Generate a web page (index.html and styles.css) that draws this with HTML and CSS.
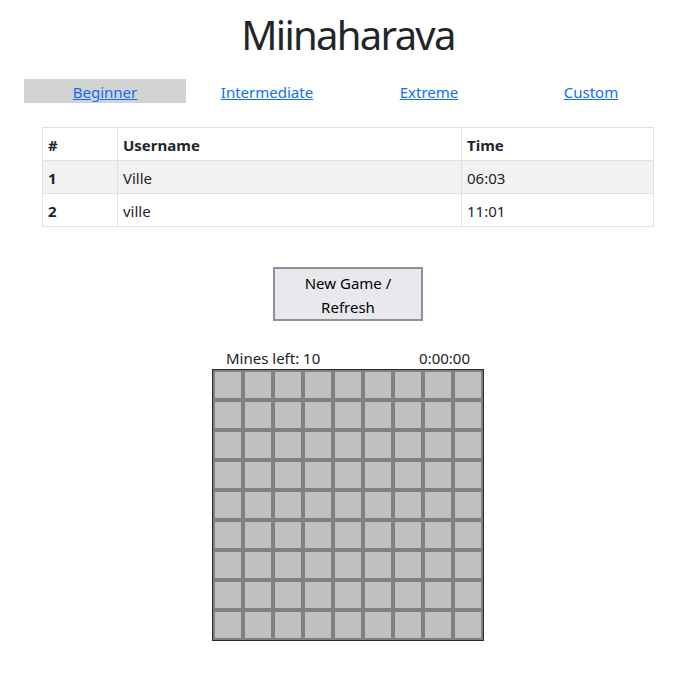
FILE: index.html
```html
<!DOCTYPE html>
<html>
<head>
<meta charset="utf-8">
<link rel="stylesheet" href="styles.css">
</head>
<body>
<div class="app">
  <h1 class="title">Miinaharava</h1>
  <nav class="tabs">
    <div class="tab active"><a href="#">Beginner</a></div>
    <div class="tab"><a href="#">Intermediate</a></div>
    <div class="tab"><a href="#">Extreme</a></div>
    <div class="tab"><a href="#">Custom</a></div>
  </nav>
  <div class="table-wrap">
    <table class="scores">
      <thead>
        <tr><th class="c1">#</th><th class="c2">Username</th><th>Time</th></tr>
      </thead>
      <tbody>
        <tr class="odd"><th>1</th><td>Ville</td><td>06:03</td></tr>
        <tr><th>2</th><td>ville</td><td>11:01</td></tr>
      </tbody>
    </table>
  </div>
  <div class="btn-row">
    <button class="new-game">New Game /<br>Refresh</button>
  </div>
  <div class="game">
    <div class="status"><span>Mines left: 10</span><span>0:00:00</span></div>
    <div class="board" id="board"></div>
  </div>
</div>
<script>
  var b = document.getElementById('board');
  for (var i = 0; i < 81; i++) {
    var c = document.createElement('div');
    c.className = 'cell';
    b.appendChild(c);
  }
</script>
</body>
</html>
```

FILE: styles.css
```css
* { box-sizing: border-box; }
html, body { margin: 0; padding: 0; background: #fff; }
body {
  font-family: "Noto Sans", "Open Sans", sans-serif;
  color: #212529;
  font-size: 15px;
}
.app {
  display: flex;
  flex-direction: column;
  align-items: center;
  padding-left: 18px;
}
.title {
  margin: 8px 0 0;
  font-weight: 400;
  font-size: 40px;
  letter-spacing: -1.7px;
  line-height: 54px;
  height: 54px;
}
.tabs {
  margin-top: 17px;
  width: 648px;
  align-self: flex-start;
  margin-left: 6px;
  display: grid;
  grid-template-columns: repeat(4, 1fr);
}
.tab {
  text-align: center;
  height: 24px;
  line-height: 24px;
  padding-top: 1px;
}
.tab.active { background: #d3d3d3; }
.tab a { color: #0d6efd; text-decoration: underline; }
.table-wrap { margin-top: 24px; width: 612px; align-self: flex-start; margin-left: 24px; }
.scores {
  width: 100%;
  border-collapse: collapse;
  border: 1px solid #dee2e6;
}
.scores th, .scores td {
  border: 1px solid #dee2e6;
  text-align: left;
  padding: 1px 5px 0;
  height: 33px;
  font-size: 15px;
}
.scores th { font-weight: 700; }
.scores td { font-weight: 400; }
.scores .c1 { width: 75px; }
.scores .c2 { width: 344px; }
.scores tr.odd { background: #f2f2f2; }
.btn-row { margin-top: 40px; }
.new-game {
  width: 150px;
  height: 54px;
  background: #e9e9ed;
  border: 2px solid #8f8f9d;
  font-family: inherit;
  font-size: 15px;
  line-height: 24px;
  color: #000;
  padding: 1px 0 0;
}
.game { margin-top: 26px; width: 272px; }
.status {
  display: flex;
  justify-content: space-between;
  padding: 0 14px;
  height: 22px;
  line-height: 22px;
  color: #222;
}
.board {
  display: grid;
  grid-template-columns: repeat(9, 30px);
  grid-auto-rows: 30px;
  border: 1px solid #2a2a2a;
  width: 272px;
}
.cell {
  background: #c0c0c0;
  border: 2px solid #808080;
}
```
